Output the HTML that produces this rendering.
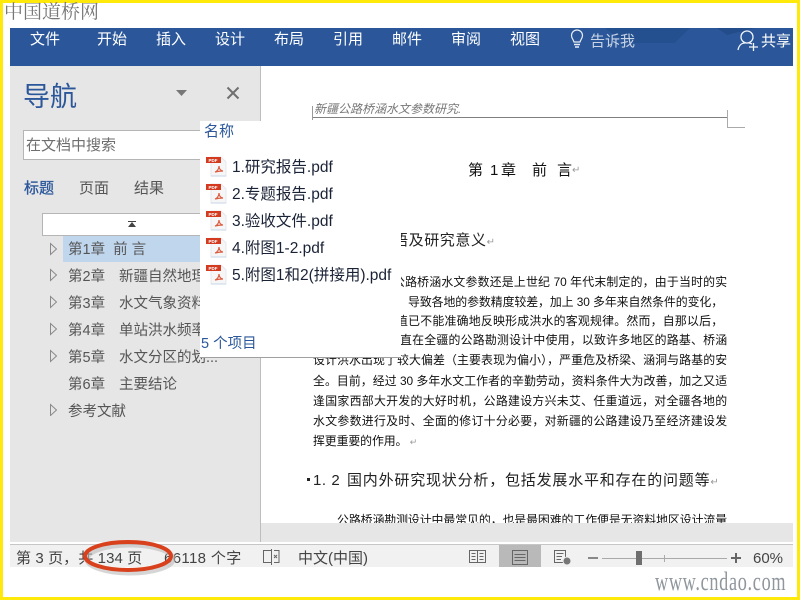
<!DOCTYPE html>
<html><head><meta charset="utf-8"><style>
html,body{margin:0;padding:0;background:#fff}
#p{position:relative;width:800px;height:600px;overflow:hidden;background:#fff;font-family:"Liberation Sans","Noto Sans CJK SC",sans-serif}
#p div,#p svg{position:absolute}
.t{white-space:nowrap;line-height:20px}
.r{color:#fff;font-size:15px;top:30px}
.n{color:#555;font-size:14.5px;left:68px}
.n2{color:#555;font-size:14.5px;left:119px}
.f{color:#1a2236;font-size:15.500px;left:232px}
.l{color:#111;font-size:11.900px;letter-spacing:-.1px;line-height:16px;white-space:nowrap;text-align:justify;text-align-last:justify}
.s{color:#444;font-size:15px;top:549px;white-space:nowrap;line-height:20px}
.h{color:#111;font-size:15px;top:161px}
</style></head><body><div id="p">
<div style="left:0;top:0;width:800px;height:3px;background:#ffe90a"></div>
<div style="left:0;top:597px;width:800px;height:3px;background:#ffe90a"></div>
<div style="left:0;top:0;width:3px;height:600px;background:#ffe90a"></div>
<div style="left:797px;top:0;width:3px;height:600px;background:#ffe90a"></div>

<div class="t" style="left:4px;top:3px;font:19px/20px 'Liberation Serif','Noto Serif CJK SC',serif;color:#777;white-space:nowrap">中国道桥网</div>

<div style="left:10px;top:28px;width:783px;height:38px;background:#2b579a"></div>
<svg style="left:590px;top:28px" width="180" height="20"><polygon points="15,0 100,0 85,15 45,15 25,8" fill="#25508f"/><polygon points="137,0 165,0 137,7 127,0" fill="#234c8b"/></svg>
<div class="t r" style="left:30px">文件</div><div class="t r" style="left:97px">开始</div><div class="t r" style="left:156px">插入</div><div class="t r" style="left:215px">设计</div><div class="t r" style="left:274px">布局</div><div class="t r" style="left:333px">引用</div><div class="t r" style="left:392px">邮件</div><div class="t r" style="left:451px">审阅</div><div class="t r" style="left:510px">视图</div>
<svg style="left:569px;top:29px" width="16" height="20" fill="none" stroke="#e8edf5" stroke-width="1.2"><path d="M5 13C4 10 2.500 9 2.500 6.500a5.500 5.500 0 0 1 11 0C13.500 9 12 10 11 13Z"/><path d="M5 15.500H11M6 18H10" stroke-width="1.500"/></svg>
<div class="t" style="left:590px;top:32px;color:#c9d4e5;font-size:15px">告诉我</div>
<svg style="left:737px;top:29px" width="22" height="23" fill="none" stroke="#f2f5fa" stroke-width="1.300"><circle cx="10" cy="8" r="6"/><path d="M1 21C2 16 5 14 8 14M12 14C13 14 14 14.500 15 15M12 18H21M16.500 14V22"/></svg>
<div class="t" style="left:761px;top:32px;color:#fff;font-size:15px">共享</div>

<div style="left:10px;top:66px;width:250px;height:476px;background:#e6e6e6"></div>
<div style="left:260px;top:66px;width:1px;height:476px;background:#bdbdbd"></div>
<div style="left:261px;top:523px;width:532px;height:19px;background:#e6e6e6"></div>

<div class="t" style="left:23px;top:81px;color:#2b579a;font-size:27px;line-height:32px">导航</div>
<svg style="left:175px;top:89px" width="14" height="8"><polygon points="1,1 12,1 6.500,7" fill="#777"/></svg>
<svg style="left:226px;top:86px" width="14" height="14"><path d="M1.500 1.500L12.500 12.500M12.500 1.500L1.500 12.500" stroke="#707070" stroke-width="2"/></svg>
<div style="left:23px;top:130px;width:200px;height:28px;background:#fff;border:1px solid #b5b5b5"></div>
<div class="t" style="left:26px;top:136px;color:#6e6e6e;font-size:15px">在文档中搜索</div>
<div class="t" style="left:24px;top:179px;color:#2b579a;font-size:15px;-webkit-text-stroke:.3px #2b579a">标题</div>
<div class="t" style="left:79px;top:179px;color:#555;font-size:15px">页面</div>
<div class="t" style="left:134px;top:179px;color:#555;font-size:15px">结果</div>
<div style="left:42px;top:213px;width:200px;height:21px;background:#fff;border:1px solid #b5b5b5"></div>
<svg style="left:128px;top:220px" width="10" height="8"><path d="M0 1H8V2H0Z" fill="#444"/><polygon points="4,2 8,7 0,7" fill="#444"/></svg>
<div style="left:63px;top:236px;width:160px;height:26px;background:#c0d6ed"></div>

<svg style="left:49px;top:241px" width="10" height="175" fill="none" stroke="#8a8a8a"><path d="M1.500 2.500L7.500 8L1.500 13.500Z"/><path d="M1.500 28.500L7.500 34L1.500 39.500Z"/><path d="M1.500 55.500L7.500 61L1.500 66.500Z"/><path d="M1.500 82.500L7.500 88L1.500 93.500Z"/><path d="M1.500 109.500L7.500 115L1.500 120.500Z"/><path d="M1.500 163.500L7.500 169L1.500 174.500Z"/></svg>
<div class="t n" style="top:240px">第1章&nbsp; 前 言</div>
<div class="t n" style="top:267px">第2章</div><div class="t n2" style="top:267px">新疆自然地理</div>
<div class="t n" style="top:294px">第3章</div><div class="t n2" style="top:294px">水文气象资料</div>
<div class="t n" style="top:321px">第4章</div><div class="t n2" style="top:321px">单站洪水频率</div>
<div class="t n" style="top:348px">第5章</div><div class="t n2" style="top:348px">水文分区的划...</div>
<div class="t n" style="top:375px">第6章</div><div class="t n2" style="top:375px">主要结论</div>
<div class="t n" style="top:402px">参考文献</div>

<div style="left:312px;top:117px;width:415px;height:1px;background:#808080"></div>
<div style="left:312px;top:106px;width:1px;height:14px;background:#999"></div>
<div style="left:727px;top:110px;width:1px;height:17px;background:#aaa"></div>
<div style="left:727px;top:127px;width:18px;height:1px;background:#aaa"></div>
<div class="t" style="left:314px;top:99px;color:#777;font-size:12px;font-style:italic">新疆公路桥涵水文参数研究.</div>

<div class="t h" style="left:468px">第</div><div class="t h" style="left:490px">1</div><div class="t h" style="left:501px">章</div><div class="t h" style="left:532px">前</div><div class="t h" style="left:557px">言</div><div class="t" style="left:572px;top:161px;color:#999;font-size:10px">↵</div>
<div class="t" style="left:393px;top:231px;color:#222;font-size:15px;letter-spacing:.6px">语及研究意义<span style="color:#999;font-size:10px">↵</span></div>

<div class="l" style="left:393px;top:274px;width:334px">公路桥涵水文参数还是上世纪 70 年代末制定的，由于当时的实</div>
<div class="l" style="left:408px;top:294px;width:315px">导致各地的参数精度较差，加上 30 多年来自然条件的变化，</div>
<div class="l" style="left:396px;top:313px;width:327px">值已不能准确地反映形成洪水的客观规律。然而，自那以后，</div>
<div class="l" style="left:400px;top:332px;width:327px">直在全疆的公路勘测设计中使用，以致许多地区的路基、桥涵</div>
<div class="l" style="left:313px;top:352px;width:414px">设计洪水出现了较大偏差（主要表现为偏小），严重危及桥梁、涵洞与路基的安</div>
<div class="l" style="left:313px;top:373px;width:414px">全。目前，经过 30 多年水文工作者的辛勤劳动，资料条件大为改善，加之又适</div>
<div class="l" style="left:313px;top:393px;width:414px">逢国家西部大开发的大好时机，公路建设方兴未艾、任重道远，对全疆各地的</div>
<div class="l" style="left:313px;top:413px;width:414px">水文参数进行及时、全面的修订十分必要，对新疆的公路建设乃至经济建设发</div>
<div class="l" style="left:313px;top:433px;text-align-last:left">挥更重要的作用。<span style="color:#999;font-size:9px"> ↵</span></div>
<div style="left:307px;top:478px;width:3px;height:3px;background:#222"></div>
<div class="t" style="left:313px;top:471px;color:#222;font-size:15px;letter-spacing:.55px">1. 2</div>
<div class="t" style="left:347px;top:471px;color:#222;font-size:15px;letter-spacing:.8px">国内外研究现状分析，包括发展水平和存在的问题等<span style="color:#999;font-size:10px">↵</span></div>
<div style="left:313px;top:512px;width:414px;height:11px;overflow:hidden"><div class="l" style="left:24px;top:0;width:390px">公路桥涵勘测设计中最常见的，也是最困难的工作便是无资料地区设计流量</div></div>

<div style="left:200px;top:121px;width:201px;height:236px;background:#fff;border-bottom:1px solid #a0a0a0"></div>
<div class="t" style="left:204px;top:122px;color:#2b579a;font-size:15px">名称</div>
<svg style="left:206px;top:156px" width="21" height="140">
<defs><g id="pd"><path d="M5 1H15L20 6V20H5Z" fill="#f6f6f6" stroke="#e4e8ee"/><path d="M5 20H20" stroke="#c5d6ea"/><rect x="0" y="1" width="15" height="6" fill="#d33a1f"/><text x="2.500" y="6" font-size="4.500" font-weight="bold" fill="#fff" font-family="Liberation Sans,sans-serif">PDF</text><path d="M9 16C11 15.500 13 13 13 10C13 13 15 15 17 15C14 15 11 15.500 9 16Z" fill="none" stroke="#dc5a3e" stroke-width="1.200"/></g></defs>
<use href="#pd" y="0"/><use href="#pd" y="27"/><use href="#pd" y="54"/><use href="#pd" y="81"/><use href="#pd" y="108"/></svg>
<div class="t f" style="top:158px">1.研究报告.pdf</div>
<div class="t f" style="top:185px">2.专题报告.pdf</div>
<div class="t f" style="top:212px">3.验收文件.pdf</div>
<div class="t f" style="top:239px">4.附图1-2.pdf</div>
<div class="t f" style="top:266px">5.附图1和2(拼接用).pdf</div>
<div class="t" style="left:201px;top:334px;color:#2b579a;font-size:14.500px">5 个项目</div>

<div style="left:10px;top:544px;width:783px;height:23px;background:#f1f1f1;border-top:1px solid #c6c6c6;box-sizing:border-box"></div>
<div class="s" style="left:16px;letter-spacing:.1px">第 3 页，共 134 页</div>
<div class="s" style="left:164px;letter-spacing:.35px">66118 个字</div>
<svg style="left:262px;top:549px" width="18" height="16" fill="none" stroke="#666"><path d="M9.500 1.500H1.500V13.500H9.500M9.500 0V16M12 1.500H17V13.500H12"/><path d="M12 6L15 9M15 6L12 9"/></svg>
<div class="s" style="left:298px">中文(中国)</div>
<div style="left:499px;top:545px;width:42px;height:22px;background:#b9b9b9"></div>
<svg style="left:468px;top:549px" width="20" height="17" fill="none" stroke="#666"><path d="M1.500 1.500H9.500V13.500H1.500ZM9.500 1.500H17.500V13.500H9.500ZM3.500 4.500H7.500M3.500 7.500H7.500M3.500 10.500H7.500M11.500 4.500H15.500M11.500 7.500H15.500M11.500 10.500H15.500"/></svg>
<svg style="left:511px;top:549px" width="18" height="17" fill="none" stroke="#666"><path d="M1.500 1.500H16.500V15.500H1.500ZM3.500 5.500H14.500M3.500 8.500H14.500M3.500 11.500H14.500"/></svg>
<svg style="left:553px;top:549px" width="19" height="17" fill="none" stroke="#666"><path d="M1.500 1.500H12.500V13.500H1.500ZM3.500 4.500H10.500M3.500 7.500H9M3.500 10.500H8"/><circle cx="14" cy="12" r="4" fill="#777" stroke="#f1f1f1"/></svg>
<div style="left:588px;top:557px;width:10px;height:2px;background:#888"></div>
<div style="left:602px;top:558px;width:125px;height:1px;background:#aaa"></div>
<div style="left:664px;top:555px;width:1px;height:7px;background:#aaa"></div>
<div style="left:636px;top:551px;width:6px;height:14px;background:#6f6f6f"></div>
<div style="left:731px;top:557px;width:10px;height:2px;background:#666"></div>
<div style="left:735px;top:553px;width:2px;height:10px;background:#666"></div>
<div class="s" style="left:753px;font-size:15px">60%</div>

<svg style="left:78px;top:536px" width="102" height="44" fill="none"><ellipse cx="52" cy="23" rx="43" ry="14" stroke="#bbb" stroke-width="5" opacity=".6"/><ellipse cx="50" cy="20" rx="43" ry="14" stroke="#d9401c" stroke-width="4"/></svg>

<div style="left:655px;top:570px;font:26px/24px 'Liberation Serif',serif;color:#8f969c;white-space:nowrap;transform:scaleX(.7);transform-origin:0 0;letter-spacing:1px">www.cndao.com</div>
</div></body></html>
